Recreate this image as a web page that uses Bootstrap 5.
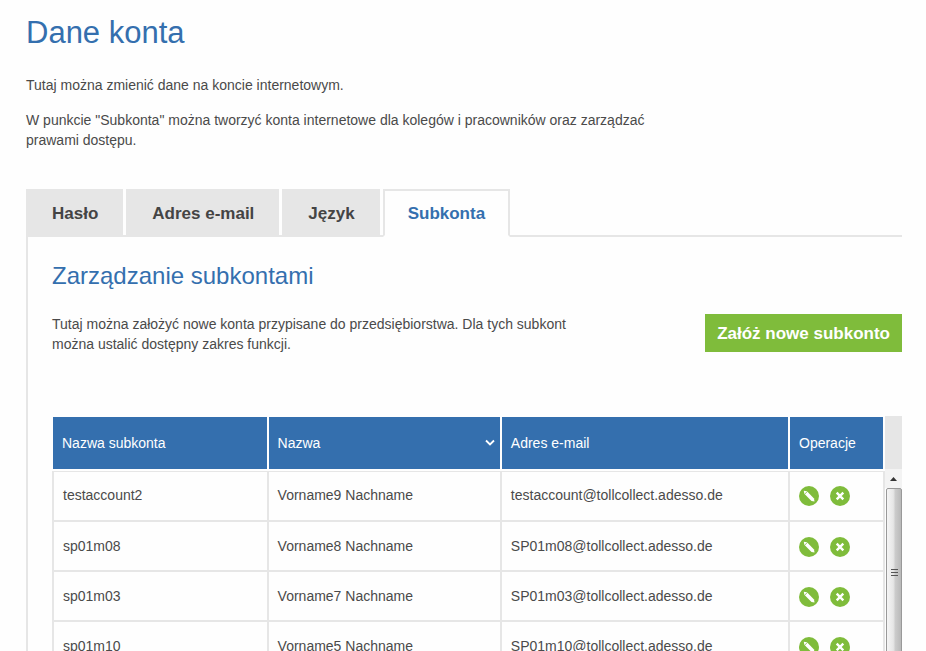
<!DOCTYPE html>
<html lang="pl">
<head>
<meta charset="utf-8">
<meta name="viewport" content="width=device-width, initial-scale=1">
<title>Dane konta</title>
<link href="https://cdn.jsdelivr.net/npm/bootstrap@5.3.0/dist/css/bootstrap.min.css" rel="stylesheet">
<style>
  :root { --brand: #346fae; --line: #e6e6e6; --green: #7fbc3b; }
  body { font-family: "Liberation Sans", Arial, sans-serif; font-size: 14px; line-height: 20px; color: #4a4a4a; background: #fefefe; }
  .page { padding: 15px 24px 0 26px; }
  .page-title { font-size: 31px; line-height: 36px; color: var(--brand); margin-bottom: 24px; font-weight: 400; }
  .intro { max-width: 640px; }
  .intro p { margin-bottom: 15px; }
  .account-tabs { margin-top: 39px; gap: 3px; border-bottom: 2px solid var(--line); }
  .account-tabs .nav-link { height: 48px; padding: 2px 23px 0 24px; border: 2px solid var(--line); border-radius: 0; margin-bottom: -2px; background: var(--line); color: #444; font-size: 17px; font-weight: 700; }
  .account-tabs .nav-link.active { background: #fefefe; color: var(--brand); border-color: var(--line) var(--line) #fefefe; padding: 2px 23px 0; }
  .panel { border-left: 2px solid var(--line); padding: 23px 0 0 24px; }
  .panel-title { font-size: 24px; line-height: 32px; color: var(--brand); font-weight: 400; margin-bottom: 22px; }
  .panel-text { max-width: 540px; }
  .btn-create { background: var(--green); color: #fff; font-size: 17px; font-weight: 700; line-height: 20px; padding: 10px 12px 8px; border: 0; border-radius: 0; }
  .btn-create:hover { background: #6fa832; color: #fff; }
  .grid-wrap { margin-top: 62px; }
  .accounts { table-layout: fixed; border-collapse: separate; border-spacing: 0; flex: 1 1 0; min-width: 0; }
  .accounts th { height: 55px; padding: 0 9px; background: var(--brand); background-clip: padding-box; color: #fff; font-weight: 400; border: 0 solid #fefefe; border-width: 1px 2px 2px 0; }
  .accounts th:first-child { border-left-width: 1px; }
  .accounts td { height: 50px; padding: 0 9px; border: 0 solid var(--line); border-width: 0 2px 2px 0; }
  .accounts td:first-child { border-left-width: 2px; }
  .accounts tbody tr:first-child td { height: 51px; border-top-width: 1px; padding-bottom: 2px; }
  .c-login { width: 26%; } .c-name { width: 28%; } .c-ops { width: 95px; }
  .sort { border: 0; background: none; color: #fff; padding: 0; width: 100%; margin-right: -4px; }
  .accounts .c-name { padding-right: 5px; }
  .op { border: 0; background: none; padding: 0; width: 20px; height: 20px; display: block; }
  .op svg { display: block; }
  .ops { gap: 11px; margin-top: 2px; }
  .scroll-col { width: 17px; }
  .scroll-head { height: 53px; background: var(--line); }
  .scroll-arrow { height: 19px; background: #f3f3f3; }
  .scroll-thumb { height: 170px; width: 16px; border: 1px solid #999; border-radius: 2px; background: linear-gradient(90deg, #f5f5f5, #e6e6e6 45%, #cbcbcb 60%, #b9b9b9); }
</style>
<script src="https://cdn.jsdelivr.net/npm/bootstrap@5.3.0/dist/js/bootstrap.bundle.min.js"></script>
</head>
<body class="vh-100 overflow-hidden">
<svg class="d-none" aria-hidden="true">
  <symbol id="i-edit" viewBox="0 0 20 20"><circle cx="10" cy="10" r="10" fill="#7fbc3b"/><path d="M4.800 4.800l3.200.500L15 12.500l.5 3.100-3-.6L5.300 7.800z" fill="#fff"/><path d="M8.500 5.300L5.500 8.300" stroke="#7fbc3b" stroke-width=".8"/></symbol>
  <symbol id="i-del" viewBox="0 0 20 20"><circle cx="10" cy="10" r="10" fill="#7fbc3b"/><path d="M6.700 6.700l6.600 6.600M13.300 6.700l-6.600 6.600" stroke="#fff" stroke-width="2.400"/></symbol>
</svg>
<main class="page">
  <h1 class="page-title">Dane konta</h1>
  <div class="intro">
    <p>Tutaj można zmienić dane na koncie internetowym.</p>
    <p class="mb-0">W punkcie "Subkonta" można tworzyć konta internetowe dla kolegów i pracowników oraz zarządzać prawami dostępu.</p>
  </div>
  <nav class="nav account-tabs" aria-label="Dane konta">
    <a class="nav-link d-flex align-items-center" href="#haslo">Hasło</a>
    <a class="nav-link d-flex align-items-center" href="#email">Adres e-mail</a>
    <a class="nav-link d-flex align-items-center" href="#jezyk">Język</a>
    <a class="nav-link d-flex align-items-center active" aria-current="page" href="#subkonta">Subkonta</a>
  </nav>
  <section class="panel" id="subkonta">
    <h2 class="panel-title">Zarządzanie subkontami</h2>
    <div class="d-flex justify-content-between align-items-start">
      <p class="panel-text mb-0">Tutaj można założyć nowe konta przypisane do przedsiębiorstwa. Dla tych subkont można ustalić dostępny zakres funkcji.</p>
      <button type="button" class="btn btn-create text-nowrap">Załóż nowe subkonto</button>
    </div>
    <div class="grid-wrap d-flex">
      <table class="accounts">
        <thead>
          <tr>
            <th class="c-login" scope="col">Nazwa subkonta</th>
            <th class="c-name" scope="col"><button type="button" class="sort d-flex justify-content-between align-items-center">Nazwa
              <svg width="10" height="8" viewBox="0 0 10 8" fill="none" stroke="#fff" stroke-width="1.800" aria-hidden="true"><path d="M1 1.500l4 4 4-4"/></svg></button></th>
            <th scope="col">Adres e-mail</th>
            <th class="c-ops" scope="col">Operacje</th>
          </tr>
        </thead>
        <tbody>
          <tr><td>testaccount2</td><td>Vorname9 Nachname</td><td>testaccount@tollcollect.adesso.de</td>
            <td><div class="ops d-flex"><button type="button" class="op" aria-label="Edytuj"><svg width="20" height="20"><use href="#i-edit"/></svg></button><button type="button" class="op" aria-label="Usuń"><svg width="20" height="20"><use href="#i-del"/></svg></button></div></td></tr>
          <tr><td>sp01m08</td><td>Vorname8 Nachname</td><td>SP01m08@tollcollect.adesso.de</td>
            <td><div class="ops d-flex"><button type="button" class="op" aria-label="Edytuj"><svg width="20" height="20"><use href="#i-edit"/></svg></button><button type="button" class="op" aria-label="Usuń"><svg width="20" height="20"><use href="#i-del"/></svg></button></div></td></tr>
          <tr><td>sp01m03</td><td>Vorname7 Nachname</td><td>SP01m03@tollcollect.adesso.de</td>
            <td><div class="ops d-flex"><button type="button" class="op" aria-label="Edytuj"><svg width="20" height="20"><use href="#i-edit"/></svg></button><button type="button" class="op" aria-label="Usuń"><svg width="20" height="20"><use href="#i-del"/></svg></button></div></td></tr>
          <tr><td>sp01m10</td><td>Vorname5 Nachname</td><td>SP01m10@tollcollect.adesso.de</td>
            <td><div class="ops d-flex"><button type="button" class="op" aria-label="Edytuj"><svg width="20" height="20"><use href="#i-edit"/></svg></button><button type="button" class="op" aria-label="Usuń"><svg width="20" height="20"><use href="#i-del"/></svg></button></div></td></tr>
        </tbody>
      </table>
      <div class="scroll-col d-flex flex-column align-items-end flex-shrink-0" aria-hidden="true">
        <div class="scroll-head w-100"></div>
        <div class="scroll-arrow w-100 d-flex align-items-center justify-content-center"><svg width="7" height="4" viewBox="0 0 7 4"><path d="M0 4L3.500 0 7 4z" fill="#333"/></svg></div>
        <div class="scroll-thumb d-flex align-items-center justify-content-center"><svg width="7" height="8" viewBox="0 0 7 8" stroke="#555"><path d="M0 .5h7M0 3.500h7M0 6.500h7"/></svg></div>
      </div>
    </div>
  </section>
</main>
</body>
</html>
